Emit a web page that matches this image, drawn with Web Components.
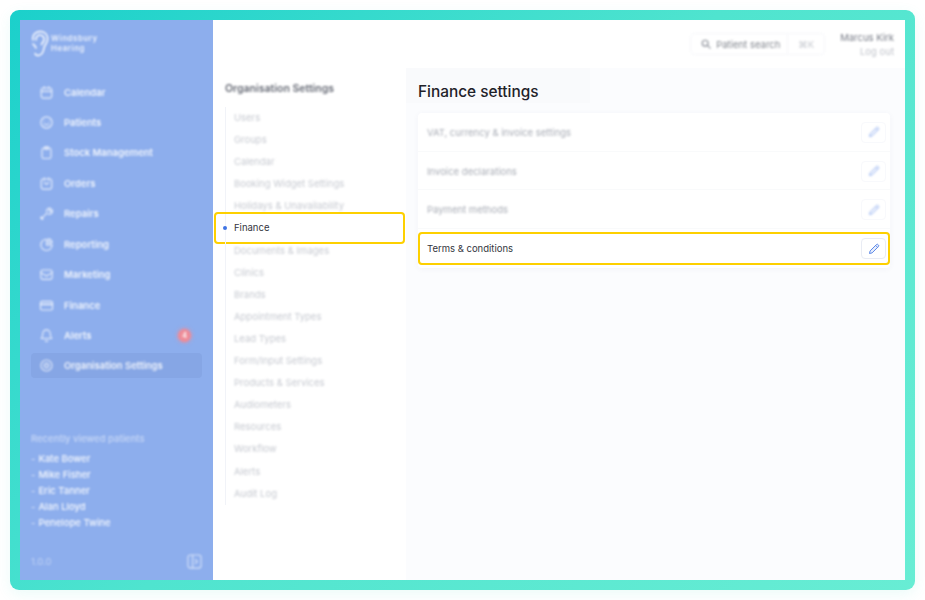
<!DOCTYPE html>
<html>
<head>
<meta charset="utf-8">
<style>
  html, body { margin: 0; padding: 0; height: 100%; background: #fff; overflow: hidden; }
  body { font-family: "Inter", "Liberation Sans", sans-serif; }
</style>
</head>
<body>
<app-frame>
  <side-bar slot="side">
    <nav-item icon="calendar">Calendar</nav-item>
    <nav-item icon="patients">Patients</nav-item>
    <nav-item icon="stock">Stock Management</nav-item>
    <nav-item icon="orders">Orders</nav-item>
    <nav-item icon="repairs">Repairs</nav-item>
    <nav-item icon="reporting">Reporting</nav-item>
    <nav-item icon="marketing">Marketing</nav-item>
    <nav-item icon="finance">Finance</nav-item>
    <nav-item icon="alerts" badge="4">Alerts</nav-item>
    <nav-item icon="settings" active>Organisation Settings</nav-item>
    <span slot="recent">Kate Bower</span>
    <span slot="recent">Mike Fisher</span>
    <span slot="recent">Eric Tanner</span>
    <span slot="recent">Alan Lloyd</span>
    <span slot="recent">Penelope Twine</span>
  </side-bar>
  <top-bar slot="top"></top-bar>
  <settings-menu slot="menu" heading="Organisation Settings">
    <menu-link>Users</menu-link>
    <menu-link>Groups</menu-link>
    <menu-link>Calendar</menu-link>
    <menu-link>Booking Widget Settings</menu-link>
    <menu-link>Holidays &amp; Unavailability</menu-link>
    <menu-link selected>Finance</menu-link>
    <menu-link>Documents &amp; Images</menu-link>
    <menu-link>Clinics</menu-link>
    <menu-link>Brands</menu-link>
    <menu-link>Appointment Types</menu-link>
    <menu-link>Lead Types</menu-link>
    <menu-link>Form/Input Settings</menu-link>
    <menu-link>Products &amp; Services</menu-link>
    <menu-link>Audiometers</menu-link>
    <menu-link>Resources</menu-link>
    <menu-link>Workflow</menu-link>
    <menu-link>Alerts</menu-link>
    <menu-link>Audit Log</menu-link>
  </settings-menu>
  <finance-panel slot="main" heading="Finance settings">
    <finance-row>VAT, currency &amp; invoice settings</finance-row>
    <finance-row>Invoice declarations</finance-row>
    <finance-row>Payment methods</finance-row>
    <finance-row selected>Terms &amp; conditions</finance-row>
  </finance-panel>
</app-frame>

<script>
const ICONS = {
  calendar: '<rect x="3" y="4" width="14" height="13.5" rx="2.5"/><path d="M3 8.5h14M7 2v3M13 2v3"/>',
  patients: '<circle cx="10" cy="10" r="7.5"/><path d="M6.8 11.8c1.6 1.6 4.8 1.6 6.4 0M7 8h.1M13 8h.1"/>',
  stock: '<rect x="4" y="4" width="12" height="14" rx="2.5"/><path d="M7.5 2.5h5v3h-5z"/>',
  orders: '<rect x="3" y="4" width="14" height="13.5" rx="2.5"/><path d="M7 2.5v3M13 2.5v3M7 9l3 2 3-2"/>',
  repairs: '<path d="M3.5 16.5l7-7M10 7.5a4.2 4.2 0 0 1 6-4.2l-2.6 2.6 1.7 1.7 2.6-2.6a4.2 4.2 0 0 1-5.6 5.5"/><path d="M3 15.5l1.5 1.5" stroke-width="3"/>',
  reporting: '<path d="M10 3a7.5 7.5 0 1 0 7.5 7.5H10z"/><path d="M12.5 2.5a6 6 0 0 1 5 5h-5z"/>',
  marketing: '<rect x="2.5" y="4" width="15" height="12.5" rx="2.5"/><path d="M2.5 7.5l7.5 4.5 7.5-4.5"/>',
  finance: '<rect x="2" y="4.5" width="16" height="11.5" rx="2"/><path d="M2 8.5h16" stroke-width="2.2"/>',
  alerts: '<path d="M10 2.5a5 5 0 0 0-5 5c0 4.500-1.500 5.500-2 6.500h14c-.5-1-2-2-2-6.500a5 5 0 0 0-5-5z"/><path d="M8.300 16.800a1.800 1.800 0 0 0 3.400 0"/>',
  settings: '<circle cx="10" cy="10" r="2.800"/><circle cx="10" cy="10" r="7.300"/>'
};

const PENCIL = '<svg width="12" height="12" viewBox="0 0 12 12" fill="#e6edfc" stroke="#5f8ae8" stroke-width="1" stroke-linejoin="round"><path d="M1.500 10.500l.6-2.600 6.400-6.400a1 1 0 0 1 1.400 0l.6.6a1 1 0 0 1 0 1.400L4.100 9.900z"/><path d="M7.600 2.400l2 2"/></svg>';

class AppFrame extends HTMLElement {
  constructor() {
    super();
    this.attachShadow({ mode: 'open' }).innerHTML = `
      <style>
        :host {
          display: block;
          width: 905px;
          height: 580px;
          margin: 10px;
          padding: 10px;
          box-sizing: border-box;
          border-radius: 9px;
          background: linear-gradient(135deg, #1bd0cb 0%, #4fe4cf 48%, #68edd4 100%);
          box-shadow: 0 4px 14px rgba(60, 220, 200, .10);
        }
        .inner { display: flex; height: 100%; background: #fff; overflow: hidden; }
        .right { flex: 1; display: flex; flex-direction: column; min-width: 0; }
        .body { flex: 1; display: flex; min-height: 0; }
      </style>
      <div class="inner">
        <slot name="side"></slot>
        <div class="right">
          <slot name="top"></slot>
          <div class="body">
            <slot name="menu"></slot>
            <slot name="main"></slot>
          </div>
        </div>
      </div>
    `;
  }
}

class SideBar extends HTMLElement {
  constructor() {
    super();
    this.attachShadow({ mode: 'open' }).innerHTML = `
      <style>
        :host {
          display: flex;
          flex-direction: column;
          width: 193px;
          height: 100%;
          flex: none;
          box-sizing: border-box;
          background: #8daeed;
          color: #fff;
          padding: 10px 11px 11px 11px;
        }
        .logo { display: flex; align-items: center; gap: 2px; margin-left: -1px; height: 27px; filter: blur(.9px); }
        .logo span { font-size: 7.800px; letter-spacing: .6px; font-weight: 600; opacity: .85; }
        .logo b { display: block; font-weight: inherit; line-height: 9.500px; }
        nav { display: flex; flex-direction: column; margin-top: 22.500px; }
        .recent { margin-top: auto; filter: blur(.9px); }
        .recent h4 { margin: 0 0 6px; font-size: 9.500px; line-height: 12px; font-weight: 500; color: rgba(255,255,255,.5); }
        ul { list-style: none; margin: 0; padding: 0; display: flex; flex-direction: column; }
        ::slotted(span) { display: block; font-size: 9.500px; line-height: 16px; font-weight: 500; color: rgba(255,255,255,.92); }
        li { display: flex; gap: 3px; font-size: 9.500px; line-height: 16px; }
        li::before { content: "-"; opacity: .7; }
        footer { display: flex; justify-content: space-between; align-items: center; margin-top: 22px; height: 16px; filter: blur(.8px); }
        footer span { font-size: 9.500px; color: rgba(255,255,255,.45); }
      </style>
      <div class="logo">
        <svg width="19" height="27" viewBox="0 0 19 27" fill="none" stroke="#fff" stroke-width="1.500" stroke-linecap="round">
          <path d="M3 10C2 4 7 1 11 1.500c4.500.5 7 4 6.500 8.500-.5 3.500-3 5-3.500 8-.5 3.500-2 7-5.500 7.500-1.500.2-3-.7-3.500-2"/>
          <path d="M6 10c-.5-3 2-5.500 4.500-5 2.500.4 4 2.500 3.500 5-.4 2-2 3-2.500 4.500M3 14c1 1 2.500 2 3 4"/>
        </svg>
        <span><b>Windsbury</b><b>Hearing</b></span>
      </div>
      <nav><slot></slot></nav>
      <div class="recent">
        <h4>Recently viewed patients</h4>
        <ul></ul>
      </div>
      <footer>
        <span>1.0.0</span>
        <svg width="15" height="15" viewBox="0 0 16 16" fill="none" stroke="#fff" stroke-width="1.200" opacity=".65">
          <rect x="1" y="1" width="14" height="14" rx="2.500"/>
          <path d="M6 1v14M8.500 5.500L11 8l-2.500 2.500"/>
        </svg>
      </footer>
    `;
  }

  connectedCallback() {
    // one row per patient, each gets its own named slot
    const list = this.shadowRoot.querySelector('ul');
    const names = [...this.querySelectorAll('[slot=recent]')];
    list.innerHTML = names.map((n, i) => `<li><slot name="recent-${i}"></slot></li>`).join('');
    names.forEach((n, i) => n.setAttribute('slot', `recent-${i}`));
  }
}

class NavItem extends HTMLElement {
  constructor() {
    super();
    this.attachShadow({ mode: 'open' });
  }

  connectedCallback() {
    const badge = this.getAttribute('badge');
    this.shadowRoot.innerHTML = `
      <style>
        :host {
          display: flex;
          align-items: center;
          gap: 10px;
          height: 25px;
          margin-bottom: 5.440px;
          padding-left: 8px;
          border-radius: 4px;
          font-size: 9.500px;
          font-weight: 600;
          color: rgba(255,255,255,.88);
          position: relative;
        }
        :host([active]) { background: rgba(110, 140, 200, .22); }
        svg { filter: blur(.8px); opacity: .8; }
        .label { flex: 1; white-space: nowrap; filter: blur(.9px); }
        .badge {
          width: 13px; height: 13px; margin-right: 11px; border-radius: 50%;
          background: #ee8c98; box-shadow: 0 0 4px #ee8c98;
          font-size: 7px; line-height: 13px; text-align: center; color: #fff;
          filter: blur(.8px);
        }
      </style>
      <svg width="15" height="15" viewBox="0 0 20 20" fill="none" stroke="#fff" stroke-width="1.500" stroke-linecap="round" stroke-linejoin="round">${ICONS[this.getAttribute('icon')] || ''}</svg>
      <span class="label"><slot></slot></span>
      ${badge ? `<span class="badge">${badge}</span>` : ''}
    `;
  }
}

class TopBar extends HTMLElement {
  constructor() {
    super();
    this.attachShadow({ mode: 'open' }).innerHTML = `
      <style>
        :host {
          display: flex;
          justify-content: flex-end;
          align-items: center;
          height: 48px;
          flex: none;
          gap: 15px;
          padding: 0 11px 0 0;
          box-sizing: border-box;
          background: #fff;
        }
        .search {
          display: flex; align-items: center;
          width: 135px; height: 22px; box-sizing: border-box;
          border: 1px solid #f5f6f9; border-radius: 4px;
          font-size: 9.500px; color: #83878f;
          filter: blur(.9px);
        }
        .search svg { margin: 0 5px 0 10px; }
        .search .txt { flex: 1; white-space: nowrap; }
        .search .keys { border-left: 1px solid #f5f6f9; height: 100%; width: 36px; display: flex; align-items: center; justify-content: center; color: #c8cbd1; }
        .user { margin-top: 2px; text-align: right; font-size: 9.500px; line-height: 14px; filter: blur(.9px); }
        .user .name { color: #777b86; }
        .user .out { color: #c0c3ca; }
      </style>
      <div class="search">
        <svg width="10" height="10" viewBox="0 0 12 12" fill="none" stroke="#8d919a" stroke-width="1.400" stroke-linecap="round"><circle cx="5" cy="5" r="3.500"/><path d="M8 8l3 3"/></svg>
        <span class="txt">Patient search</span>
        <span class="keys">⌘K</span>
      </div>
      <div class="user">
        <div class="name">Marcus Kirk</div>
        <div class="out">Log out</div>
      </div>
    `;
  }
}

class SettingsMenu extends HTMLElement {
  constructor() {
    super();
    this.attachShadow({ mode: 'open' });
  }

  connectedCallback() {
    this.shadowRoot.innerHTML = `
      <style>
        :host {
          display: block;
          width: 193px;
          flex: none;
          box-sizing: border-box;
          padding-top: 14px;
          background: #fff;
        }
        h3 {
          margin: 0 0 11px 12px;
          font-size: 10.500px; line-height: 14px; font-weight: 600;
          color: #666a75; filter: blur(1px);
          white-space: nowrap;
        }
      </style>
      <h3>${this.getAttribute('heading')}</h3>
      <div class="list"><slot></slot></div>
    `;
  }
}

class MenuLink extends HTMLElement {
  constructor() {
    super();
    this.attachShadow({ mode: 'open' }).innerHTML = `
      <style>
        :host {
          display: block;
          position: relative;
          height: 22.100px;
          line-height: 22.100px;
          padding-left: 21px;
          font-size: 9.500px;
          color: #c6c9d0;
          white-space: nowrap;
        }
        :host::before {
          content: ""; position: absolute; left: 12px; top: 0; bottom: 0; width: 1px;
          background: #f1f3f8;
        }
        span { display: inline-block; filter: blur(1px); }
        :host([selected]) { color: #33363e; }
        :host([selected]) span { filter: none; }
        :host([selected])::after {
          content: ""; position: absolute; left: 1px; right: 1px; top: -5px; bottom: -4px;
          border: 2px solid #fdd000; border-radius: 4px;
        }
        .dot { display: none; }
        :host([selected]) .dot {
          display: block; position: absolute; left: 10px; top: 9px;
          width: 4px; height: 4px; border-radius: 50%; background: #3f74e4;
        }
      </style>
      <i class="dot"></i><span><slot></slot></span>
    `;
  }
}

class FinancePanel extends HTMLElement {
  constructor() {
    super();
    this.attachShadow({ mode: 'open' });
  }

  connectedCallback() {
    this.shadowRoot.innerHTML = `
      <style>
        :host {
          display: block;
          flex: 1;
          min-width: 0;
          box-sizing: border-box;
          padding: 0 15px 0 12px;
          background: #fbfcfe;
        }
        h2 {
          box-sizing: border-box;
          width: 184px;
          height: 35px;
          margin: 0 0 10px -12px;
          padding: 12px 0 0 12px;
          background: #f9fafc;
          font-size: 15.400px; line-height: 23px; font-weight: 500;
          color: #1f2229;
          white-space: nowrap;
        }
        .card { background: #fff; border-radius: 4px; box-shadow: 0 1px 6px rgba(60, 70, 110, .045); }
      </style>
      <h2>${this.getAttribute('heading')}</h2>
      <div class="card"><slot></slot></div>
    `;
  }
}

class FinanceRow extends HTMLElement {
  constructor() {
    super();
    this.attachShadow({ mode: 'open' }).innerHTML = `
      <style>
        :host {
          display: flex;
          align-items: center;
          justify-content: space-between;
          position: relative;
          height: 38.700px;
          padding: 1px 4px 0 9px;
          box-sizing: border-box;
          border-bottom: 1px solid #f9fafb;
          font-size: 9.500px;
          color: #a8acb5;
        }
        span { filter: blur(1px); }
        .edit {
          width: 25px; height: 21px; box-sizing: border-box;
          display: flex; align-items: center; justify-content: center;
          background: #fff; border: 1px solid #f8f9fc; border-radius: 4px;
        }
        .edit svg { opacity: .6; filter: blur(.8px); }
        :host([selected]) { color: #33363e; border-bottom: 0; }
        :host([selected]) span { filter: none; }
        :host([selected]) .edit { border-color: #e9ecf4; }
        :host([selected]) .edit svg { opacity: 1; filter: none; }
        :host([selected])::after {
          content: ""; position: absolute; left: 0; right: 0; top: 3px; bottom: 3px;
          border: 2px solid #fdd000; border-radius: 4px;
          pointer-events: none;
        }
      </style>
      <span><slot></slot></span>
      <div class="edit">${PENCIL}</div>
    `;
  }
}

customElements.define('app-frame', AppFrame);
customElements.define('side-bar', SideBar);
customElements.define('nav-item', NavItem);
customElements.define('top-bar', TopBar);
customElements.define('settings-menu', SettingsMenu);
customElements.define('menu-link', MenuLink);
customElements.define('finance-panel', FinancePanel);
customElements.define('finance-row', FinanceRow);
</script>
</body>
</html>
